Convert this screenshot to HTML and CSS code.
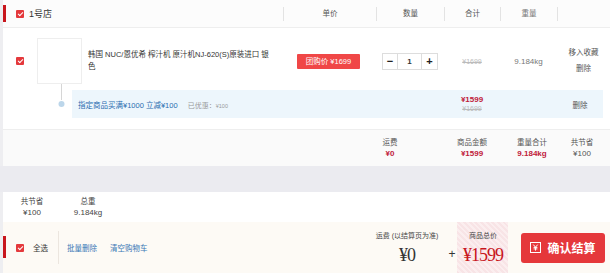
FILE: index.html
```html
<!DOCTYPE html>
<html lang="zh-CN">
<head>
  <meta charset="UTF-8" />
  <meta name="viewport" content="width=device-width, initial-scale=1" />
  <title>购物车</title>
  <link rel="stylesheet" href="styles.css">
</head>
<body>

  <div class="cart">
    <div class="shop-head">
      <span class="mark"></span>
      <div class="col-item">
        <span class="check"></span>
        <span class="shop-name">1号店</span>
      </div>
      <div class="th col-price">单价</div>
      <div class="th col-qty">数量</div>
      <div class="th col-sum">合计</div>
      <div class="th col-weight">重量</div>
      <div class="th col-op"></div>
    </div>

    <div class="shop-body">
      <div class="item">
        <div class="col-item">
          <span class="check"></span>
          <div class="thumb"></div>
          <div class="title">韩国 NUC/恩优希 榨汁机 原汁机NJ-620(S)原装进口 银色</div>
        </div>
        <div class="col-price"><span class="badge">团购价 ¥1699</span></div>
        <div class="col-qty">
          <div class="qty">
            <span class="qty-btn">−</span>
            <span class="qty-num">1</span>
            <span class="qty-btn plus">+</span>
          </div>
        </div>
        <div class="col-sum"><span class="old">¥1699</span></div>
        <div class="col-weight">9.184kg</div>
        <div class="col-op ops">
          <a href="#">移入收藏</a>
          <a href="#">删除</a>
        </div>
      </div>

      <div class="promo-row">
        <svg class="tree" width="69" height="34" viewBox="0 0 69 34">
          <line x1="58.5" y1="0" x2="58.5" y2="17" stroke="#d6d6d6" stroke-width="1" />
          <circle cx="58.5" cy="20" r="4" fill="#fff" />
          <circle cx="58.5" cy="20" r="3" fill="#bcd6ea" />
        </svg>
        <div class="promo">
          <div class="promo-text">
            <a href="#" class="promo-link">指定商品买满¥1000 立减¥100</a>
            <span class="promo-saved">已优惠：<small>¥100</small></span>
          </div>
          <div class="col-sum promo-sum">
            <span class="now">¥1599</span>
            <span class="old">¥1699</span>
          </div>
          <div class="col-weight"></div>
          <div class="promo-op"><a href="#">删除</a></div>
        </div>
      </div>
    </div>

    <div class="summary">
      <div class="sum-cell fee"><span>运费</span><b>¥0</b></div>
      <div class="sum-cell goods"><span>商品金额</span><b>¥1599</b></div>
      <div class="sum-cell weight"><span>重量合计</span><b>9.184kg</b></div>
      <div class="sum-cell save"><span>共节省</span><em>¥100</em></div>
    </div>
  </div>

  <div class="gap"></div>

  <div class="totals">
    <div class="total-cell first"><span>共节省</span><em>¥100</em></div>
    <div class="total-cell"><span>总重</span><em>9.184kg</em></div>
  </div>

  <div class="bar">
    <span class="mark"></span>
    <span class="check"></span>
    <span class="all">全选</span>
    <span class="bar-sep"></span>
    <a href="#" class="bar-link">批量删除</a>
    <a href="#" class="bar-link">清空购物车</a>

    <span class="wm-band"></span>

    <div class="pay">
      <div class="pay-fee">
        <span>运费 (以结算页为准)</span>
        <strong>¥0</strong>
      </div>
      <div class="pay-plus">+</div>
      <div class="pay-total">
        <span>商品总价</span>
        <strong>¥1599</strong>
      </div>
      <a href="#" class="btn">
        <svg width="11" height="11" viewBox="0 0 11 11">
          <rect x="0.5" y="0.5" width="10" height="10" fill="none" stroke="#fff" stroke-width="1" />
          <path d="M3.3 2.6 L5.5 5.2 L7.7 2.6 M5.5 5.2 V8.6 M3.6 5.4 H7.4 M3.6 6.9 H7.4" fill="none" stroke="#fff" stroke-width="1" />
        </svg>
        确认结算
      </a>
    </div>
  </div>

</body>
</html>
```

FILE: styles.css
```css
body {
  margin: 0;
  background: #eeeef1;
  font-family: "Liberation Sans", "Noto Sans CJK SC", sans-serif;
  font-size: 8px;
  color: #333;
}
a {
  color: inherit;
  text-decoration: none;
}

.cart {
  margin-left: 3px;
  background: #fff;
}

/* 店铺表头 */
.shop-head {
  position: relative;
  display: flex;
  align-items: center;
  height: 27px;
  border-bottom: 1px solid #eee;
  background: #fcfcfc;
}
.mark {
  position: absolute;
  left: 0;
  width: 3px;
  background: #c8161d;
}
.shop-head .mark {
  top: 5px;
  height: 17px;
}
.col-item {
  flex: 1;
  display: flex;
  align-items: center;
}
.col-price { width: 93px; }
.col-qty { width: 68px; }
.col-sum { width: 56px; }
.col-weight { width: 57px; }
.col-op { width: 53px; }
.th {
  height: 14px;
  line-height: 14px;
  border-left: 1px solid #e3e3e3;
  text-align: center;
  color: #555;
  font-size: 7.5px;
  box-sizing: border-box;
}
.check {
  position: relative;
  display: inline-block;
  flex: none;
  width: 8px;
  height: 8px;
  margin-left: 13px;
  background: #e4393c;
  border-radius: 1px;
}
.check::after {
  content: "";
  position: absolute;
  left: 2.5px;
  top: 1px;
  width: 2px;
  height: 4px;
  border: solid #fff;
  border-width: 0 1px 1px 0;
  transform: rotate(45deg);
}
.shop-name {
  margin-left: 5px;
  font-size: 9px;
  color: #333;
}

/* 商品 */
.shop-body {
  padding-bottom: 11px;
  border-bottom: 1px solid #eee;
}
.item {
  display: flex;
  align-items: center;
  padding-top: 10px;
}
.thumb {
  flex: none;
  width: 43px;
  height: 44px;
  margin-left: 13px;
  border: 1px solid #eee;
  background: #fff;
}
.title {
  width: 184px;
  margin-left: 6px;
  font-size: 7.5px;
  line-height: 12px;
  color: #333;
}
.item .col-price,
.item .col-qty,
.item .col-sum,
.item .col-weight,
.item .col-op {
  display: flex;
  justify-content: center;
  align-items: center;
  text-align: center;
}
.item .col-price {
  justify-content: flex-start;
  padding-left: 14px;
  box-sizing: border-box;
}
.badge {
  display: inline-block;
  width: 63px;
  height: 15px;
  line-height: 15px;
  background: #f04747;
  color: #fff;
  border-radius: 1px;
  font-size: 7.5px;
  text-align: center;
}
.qty {
  display: flex;
  height: 17px;
  border: 1px solid #ddd;
  box-sizing: border-box;
}
.qty-btn,
.qty-num {
  display: flex;
  align-items: center;
  justify-content: center;
}
.qty-btn {
  width: 14px;
  font-size: 11px;
  font-weight: bold;
  color: #222;
}
.qty-btn.plus {
  width: 15px;
}
.qty-num {
  width: 23px;
  border-left: 1px solid #ddd;
  border-right: 1px solid #ddd;
  font-size: 8px;
  font-weight: bold;
}
.old {
  color: #bbb;
  text-decoration: line-through;
  font-size: 7px;
}
.col-weight {
  color: #777;
}
.ops {
  flex-direction: column;
  line-height: 16px;
  color: #555;
  font-size: 7.5px;
}

/* 促销 */
.promo-row {
  display: flex;
}
.tree {
  flex: none;
  display: block;
}
.promo {
  display: flex;
  align-items: center;
  width: 531px;
  height: 28px;
  margin-top: 6px;
  background: #edf6fc;
}
.promo-text {
  flex: 1;
  padding-left: 6px;
  font-size: 7.5px;
}
.promo-link {
  color: #2a6db0;
}
.promo-saved {
  margin-left: 8px;
  color: #999;
  font-size: 7px;
}
.promo-saved small {
  font-size: 5.5px;
}
.promo-sum {
  display: flex;
  flex-direction: column;
  align-items: center;
  line-height: 9px;
}
.now {
  color: #c0203a;
  font-weight: bold;
}
.promo-op {
  width: 46px;
  text-align: center;
  color: #555;
  font-size: 7.5px;
}

/* 小计 */
.summary {
  display: flex;
  justify-content: flex-end;
  height: 36px;
  background: #fafafa;
}
.sum-cell {
  display: flex;
  flex-direction: column;
  align-items: center;
  justify-content: center;
  line-height: 11px;
}
.sum-cell span {
  color: #555;
  font-size: 7.5px;
}
.sum-cell b {
  color: #c0203a;
}
.sum-cell em {
  font-style: normal;
  color: #555;
}
.fee { width: 88px; }
.goods { width: 76px; }
.weight { width: 44px; }
.save { width: 56px; }

.gap {
  height: 26px;
  background: #ebebf0;
}

/* 合计 */
.totals {
  display: flex;
  height: 30px;
  margin-left: 3px;
  background: #fff;
}
.total-cell {
  display: flex;
  flex-direction: column;
  align-items: center;
  justify-content: center;
  width: 54px;
  line-height: 11px;
  color: #444;
}
.total-cell.first {
  width: 58px;
}
.total-cell span {
  font-size: 7.5px;
}
.total-cell em {
  font-style: normal;
}

/* 结算栏 */
.bar {
  position: relative;
  display: flex;
  align-items: center;
  height: 51px;
  margin-left: 3px;
  background: #fdfaf5;
  overflow: hidden;
}
.bar .mark {
  top: 14px;
  height: 22px;
}
.all {
  margin-left: 9px;
  font-size: 7.5px;
  color: #333;
}
.bar-sep {
  width: 1px;
  height: 33px;
  margin-left: 10px;
  background: #ece6df;
}
.bar-link {
  margin-left: 8px;
  color: #3a78b5;
  font-size: 7.5px;
}
.bar-link + .bar-link {
  margin-left: 13px;
}
.pay {
  display: flex;
  align-items: center;
  margin-left: auto;
  margin-right: 5px;
  position: relative;
  z-index: 1;
}
.pay-fee,
.pay-total {
  display: flex;
  flex-direction: column;
  align-items: center;
}
.pay-fee {
  width: 68px;
}
.pay-total {
  width: 40px;
}
.pay-fee span,
.pay-total span {
  font-size: 7px;
  line-height: 10px;
  color: #444;
}
.pay-fee strong,
.pay-total strong {
  margin-top: 4px;
  font-family: "Liberation Serif", "Noto Sans CJK SC", serif;
  font-size: 18px;
  font-weight: normal;
  line-height: 20px;
  letter-spacing: -1px;
}
.pay-fee strong {
  color: #333;
}
.pay-total strong {
  color: #c8161d;
}
.pay-plus {
  width: 22px;
  margin-top: 13px;
  text-align: center;
  font-size: 12px;
  color: #333;
}
.btn {
  display: flex;
  align-items: center;
  justify-content: center;
  gap: 6px;
  width: 84px;
  height: 30px;
  margin-left: 18px;
  background: #e5383b;
  border-radius: 3px;
  color: #fff;
  font-size: 12px;
  font-weight: bold;
}

/* 截图上的水印色带 */
.wm-band {
  position: absolute;
  left: 454px;
  top: 0;
  width: 51px;
  height: 51px;
  background: repeating-linear-gradient(45deg, #f8e4e6 0 2px, #fbeeef 2px 4px);
}
```
